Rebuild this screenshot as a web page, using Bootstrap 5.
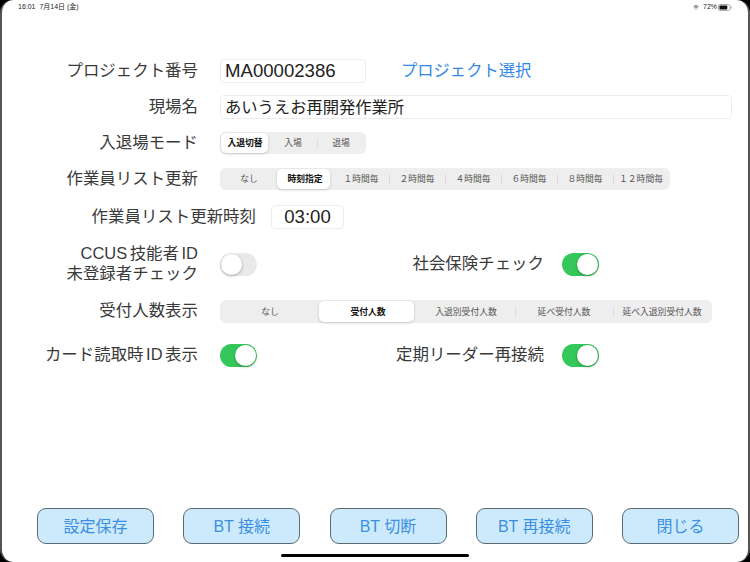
<!DOCTYPE html>
<html lang="ja">
<head>
  <meta charset="UTF-8" />
  <title>設定</title>
  <link href="https://cdn.jsdelivr.net/npm/bootstrap@5.3.0/dist/css/bootstrap.min.css" rel="stylesheet">
  <style>
    html, body { height: 100%; margin: 0; background: #000; overflow: hidden; }
    body { font-family: "Liberation Sans", "Noto Sans CJK JP", sans-serif; color: #222; }
    .screen { width: 750px; height: 562px; background: #fff; border-left: 2px solid #555; border-right: 2px solid #555; border-radius: 13px; overflow: hidden; position: relative; }
    .status-bar { height: 14px; padding: 0 16px; font-size: 7px; line-height: 14px; color: #222; }
    .status-bar svg { display: block; }
    .batt { margin-left: -3px; }
    .form-area { padding-top: 45px; }
    .line-24 { height: 24px; }
    .line-22 { height: 22px; }
    .line-23 { height: 23px; }
    .line-38 { height: 38px; }
    .gap-12 { margin-bottom: 12px; }
    .gap-13 { margin-bottom: 13px; }
    .gap-14 { margin-bottom: 14px; }
    .gap-15 { margin-bottom: 15px; }
    .gap-16 { margin-bottom: 16px; }
    .gap-17 { margin-bottom: 17px; }
    .gap-21 { margin-bottom: 21px; }
    .lbl { width: 196px; flex: none; text-align: right; font-size: 16.45px; line-height: 20px; padding-bottom: 3px; color: #3a3a3a; font-weight: 400; white-space: nowrap; word-spacing: -2px; }
    .ctl { margin-left: 22px; }
    .txt-box { height: 24px; border: 1px solid #ececec; border-radius: 4px; padding: 0 4px; font-size: 16.3px; line-height: 22px; color: #222; white-space: nowrap; }
    .num-txt { font-size: 18.6px; }
    .w-no { width: 146px; }
    .w-site { width: 512px; }
    .w-time { width: 73px; text-align: center; margin-left: 15px; }
    .lbl-time { width: 254px; }
    .pick-link { margin-left: 35px; padding-bottom: 3px; color: #3388e4; font-size: 16.3px; text-decoration: none; line-height: 22px; }
    .seg { background: #eeeeef; border-radius: 6px; height: 22px; padding: 1px; isolation: isolate; font-family: "Noto Sans CJK JP", sans-serif; }
    .seg-item { flex: 1 1 0; min-width: 0; text-align: center; font-size: 8.8px; line-height: 20px; color: #555; position: relative; white-space: nowrap; }
    .seg-item + .seg-item::before { content: ""; position: absolute; left: 0; top: 5px; bottom: 5px; width: 1px; background: #dcdcde; }
    .seg-item.on { color: #111; font-weight: 700; }
    .seg-item.on::after { content: ""; position: absolute; top: 0; bottom: 0; left: 0; right: 3px; z-index: -1; background: #fff; border-radius: 5px; box-shadow: 0 1px 3px rgba(0,0,0,.18); }
    .seg-3 .seg-item.on::after { right: 1px; }
    .seg-item.on::before, .seg-item.on + .seg-item::before { display: none; }
    .seg-3 { width: 146px; }
    .seg-8 { width: 450px; }
    .seg-5 { width: 492px; height: 23px; }
    .seg-5 .seg-item { line-height: 21px; }
    .tgl { width: 37px; height: 23px; border-radius: 12px; background: #e9e9ea; position: relative; flex: none; }
    .tgl::after { content: ""; position: absolute; top: 1px; left: 1px; width: 21px; height: 21px; border-radius: 50%; background: #fff; box-shadow: 0 1px 3px rgba(0,0,0,.3); }
    .tgl.on { background: #34c759; }
    .tgl.on::after { left: 15px; }
    .first-half { width: 255px; }
    .lbl-right { width: 287px; margin-right: 18px; }
    .bottom-bar { position: absolute; left: 35px; right: 9px; top: 508px; }
    .act { width: 117px; height: 36px; background: #cdeafd; border: 1px solid #5a6a72; border-radius: 9px; color: #3b8fe0; font-size: 16px; padding: 0; line-height: 35px; }
    .home-bar { position: absolute; left: 279px; top: 554px; width: 188px; height: 3px; border-radius: 2px; background: #000; }
  </style>
</head>
<body>
  <div class="screen">
    <!-- ステータスバー -->
    <div class="status-bar d-flex justify-content-between align-items-center">
      <span>16:01&nbsp;&nbsp;7月14日 (金)</span>
      <span class="d-flex align-items-center gap-1">
        <svg width="6" height="5" viewBox="0 0 12 10" fill="none" stroke="#222" stroke-width="1.5"><path d="M1 3.6 C4 0.6 8 0.6 11 3.6"/><path d="M3 5.8 C4.8 4 7.2 4 9 5.8"/><path d="M6 9.6 L4.6 8 C5.4 7.2 6.6 7.2 7.4 8 Z" fill="#222" stroke="none"/></svg>
        <span>72%</span>
        <svg class="batt" width="14" height="7" viewBox="0 0 14 7"><rect x=".5" y=".5" width="11.5" height="6" rx="1.5" fill="none" stroke="#aaa"/><rect x="1.5" y="1.5" width="7.8" height="4" rx=".7" fill="#111"/><rect x="12.7" y="2.4" width="1" height="2.2" fill="#aaa"/></svg>
      </span>
    </div>

    <div class="form-area">
      <div class="line-24 gap-12 d-flex align-items-center">
        <div class="lbl">プロジェクト番号</div>
        <div class="ctl txt-box w-no num-txt">MA00002386</div>
        <a class="pick-link" href="#">プロジェクト選択</a>
      </div>
      <div class="line-24 gap-13 d-flex align-items-center">
        <div class="lbl">現場名</div>
        <div class="ctl txt-box w-site">あいうえお再開発作業所</div>
      </div>
      <div class="line-22 gap-14 d-flex align-items-center">
        <div class="lbl">入退場モード</div>
        <div class="ctl seg seg-3 d-flex">
          <div class="seg-item on">入退切替</div>
          <div class="seg-item">入場</div>
          <div class="seg-item">退場</div>
        </div>
      </div>
      <div class="line-22 gap-15 d-flex align-items-center">
        <div class="lbl">作業員リスト更新</div>
        <div class="ctl seg seg-8 d-flex">
          <div class="seg-item">なし</div>
          <div class="seg-item on">時刻指定</div>
          <div class="seg-item">１時間毎</div>
          <div class="seg-item">２時間毎</div>
          <div class="seg-item">４時間毎</div>
          <div class="seg-item">６時間毎</div>
          <div class="seg-item">８時間毎</div>
          <div class="seg-item">１２時間毎</div>
        </div>
      </div>
      <div class="line-24 gap-16 d-flex align-items-center">
        <div class="lbl lbl-time">作業員リスト更新時刻</div>
        <div class="txt-box w-time num-txt">03:00</div>
      </div>
      <div class="line-38 gap-17 d-flex align-items-center">
        <div class="d-flex align-items-center first-half">
          <div class="lbl">CCUS 技能者 ID<br>未登録者チェック</div>
          <div class="ctl tgl"></div>
        </div>
        <div class="lbl lbl-right">社会保険チェック</div>
        <div class="tgl on"></div>
      </div>
      <div class="line-23 gap-21 d-flex align-items-center">
        <div class="lbl">受付人数表示</div>
        <div class="ctl seg seg-5 d-flex">
          <div class="seg-item">なし</div>
          <div class="seg-item on">受付人数</div>
          <div class="seg-item">入退別受付人数</div>
          <div class="seg-item">延べ受付人数</div>
          <div class="seg-item">延べ入退別受付人数</div>
        </div>
      </div>
      <div class="line-23 d-flex align-items-center">
        <div class="d-flex align-items-center first-half">
          <div class="lbl">カード読取時 ID 表示</div>
          <div class="ctl tgl on"></div>
        </div>
        <div class="lbl lbl-right">定期リーダー再接続</div>
        <div class="tgl on"></div>
      </div>
    </div>

    <!-- 下部ボタン -->
    <div class="bottom-bar d-flex justify-content-between">
      <button type="button" class="btn act">設定保存</button>
      <button type="button" class="btn act">BT 接続</button>
      <button type="button" class="btn act">BT 切断</button>
      <button type="button" class="btn act">BT 再接続</button>
      <button type="button" class="btn act">閉じる</button>
    </div>
    <div class="home-bar"></div>
  </div>
  <script src="https://cdn.jsdelivr.net/npm/bootstrap@5.3.0/dist/js/bootstrap.bundle.min.js"></script>
</body>
</html>
